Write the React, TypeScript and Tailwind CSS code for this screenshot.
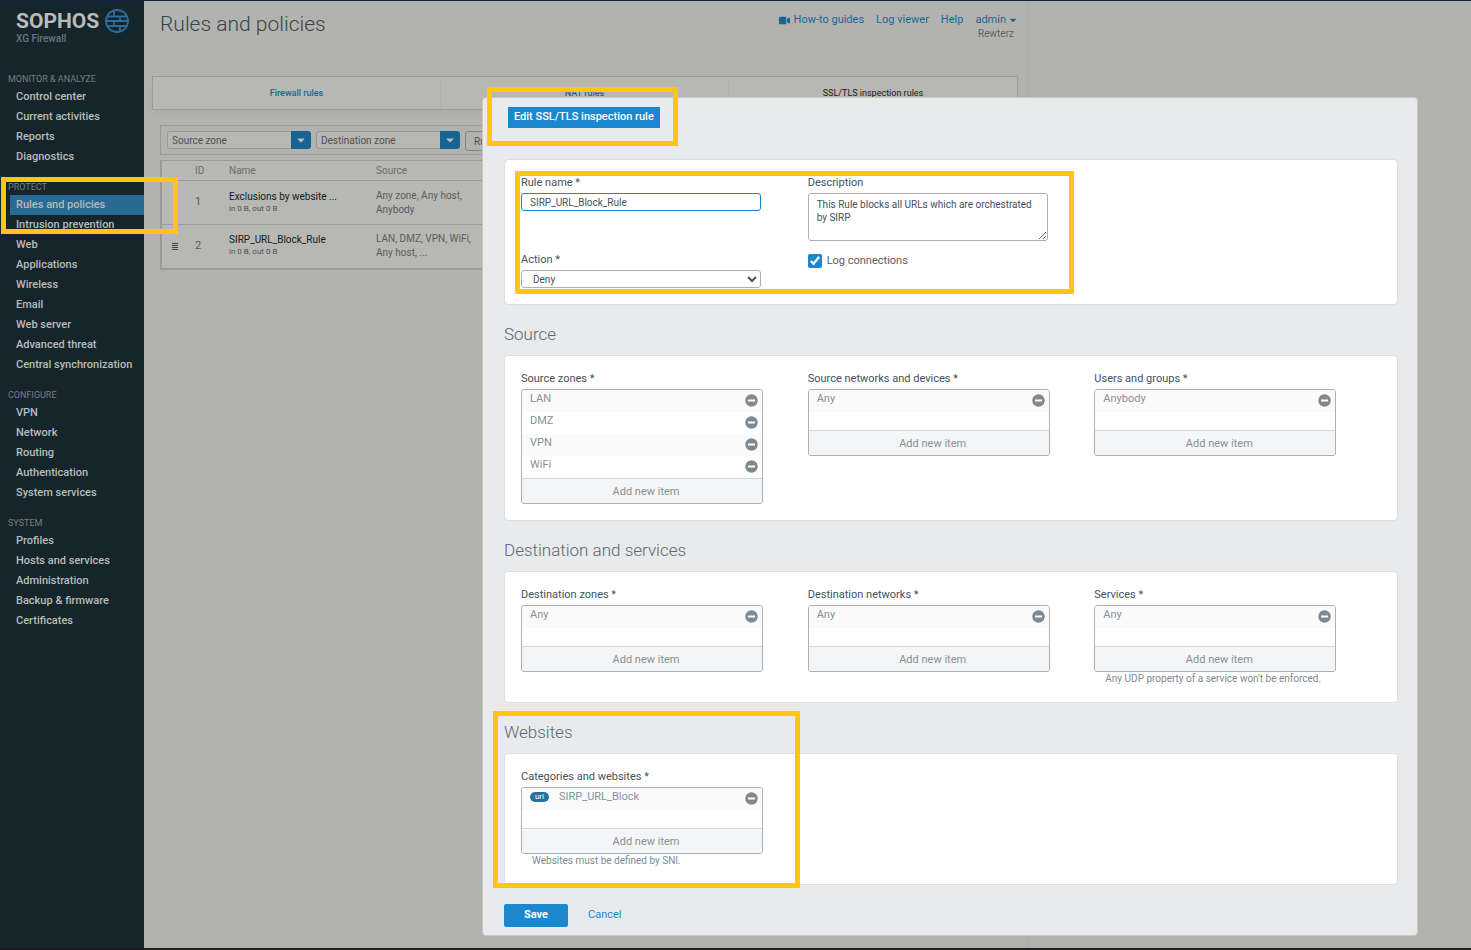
import type { ReactNode } from 'react';
import { FaVideo, FaCaretDown } from 'react-icons/fa';

const navSections = [
    { title: 'MONITOR & ANALYZE', items: ['Control center', 'Current activities', 'Reports', 'Diagnostics'] },
    {
        title: 'PROTECT',
        items: [
            'Rules and policies',
            'Intrusion prevention',
            'Web',
            'Applications',
            'Wireless',
            'Email',
            'Web server',
            'Advanced threat',
            'Central synchronization',
        ],
    },
    { title: 'CONFIGURE', items: ['VPN', 'Network', 'Routing', 'Authentication', 'System services'] },
    {
        title: 'SYSTEM',
        items: ['Profiles', 'Hosts and services', 'Administration', 'Backup & firmware', 'Certificates'],
    },
];

const rules = [
    { id: 1, name: 'Exclusions by website ...', source: 'Any zone, Any host, Anybody', draggable: false },
    { id: 2, name: 'SIRP_URL_Block_Rule', source: 'LAN, DMZ, VPN, WiFi, Any host, ...', draggable: true },
];

function Highlight({ className }: { className: string }) {
    return <div className={`pointer-events-none absolute z-20 border-5 border-[#ffc80f] ${className}`} />;
}

function GlobeLogo() {
    return (
        <svg width="24" height="24" viewBox="0 0 24 24" fill="none" stroke="#2a6f9a" strokeWidth="1.8">
            <circle cx="12" cy="12" r="11" />
            <path d="M2.5 7.5h19M1 12h22M2.5 17h19M9 1.5v6M15 7.5v4.5M9 12v5M15 17v5.5" />
        </svg>
    );
}

function Sidebar() {
    return (
        <aside className="relative w-36 shrink-0 bg-[#15252b]">
            <div className="flex h-[70px] items-start gap-1.5 pl-4 pt-2">
                <div>
                    <div className="text-[21px] font-bold leading-6 text-[#b9bcba]">SOPHOS</div>
                    <div className="text-[10px] font-medium leading-3 text-[#69767b]">XG Firewall</div>
                </div>
                <GlobeLogo />
            </div>
            <nav>
                {navSections.map((section) => (
                    <div key={section.title} className="mb-3">
                        <h2 className="pl-2 text-[9px] leading-4 text-[#767f80]">{section.title}</h2>
                        {section.items.map((item) => (
                            <a
                                key={item}
                                href="#"
                                className={`ml-2.5 block pl-1.5 text-[11px] font-medium leading-5 whitespace-nowrap text-[#b9bcba] ${
                                    item === 'Rules and policies' ? 'bg-[#286a93]' : ''
                                }`}
                            >
                                {item}
                            </a>
                        ))}
                    </div>
                ))}
            </nav>
            <Highlight className="left-px top-44 h-[57px] w-[177px]" />
        </aside>
    );
}

function ZoneFilter({ label }: { label: string }) {
    return (
        <div className="flex h-[18px] w-36 overflow-hidden rounded-[3px]">
            <select
                aria-label={label}
                className="min-w-0 flex-1 appearance-none rounded-l-[3px] border border-r-0 border-[#979a98] bg-[#b7b8b3] pl-1 text-[10px] text-[#4c5153]"
            >
                <option>{label}</option>
            </select>
            <span className="flex w-5 items-center justify-center bg-[#176391] text-[#b9bcba]">
                <FaCaretDown size={12} />
            </span>
        </div>
    );
}

function RulesTable() {
    return (
        <table className="mt-[5px] w-full border-collapse border-2 border-t border-[#999b99] bg-[#b7b8b3] text-left">
            <thead>
                <tr className="h-5 border-b border-[#999b99] text-[10px] text-[#696d6d]">
                    <th className="w-[30px]" />
                    <th className="w-[38px] pl-1 font-normal">ID</th>
                    <th className="w-[147px] font-normal">Name</th>
                    <th className="font-normal">Source</th>
                </tr>
            </thead>
            <tbody>
                {rules.map((rule) => (
                    <tr key={rule.id} className="h-11 border-b border-[#999b99]">
                        <td className="pl-2.5">
                            {rule.draggable && (
                                <svg width="6" height="9" viewBox="0 0 6 9" stroke="#3f4344">
                                    <path d="M0 1.5h6M0 3.5h6M0 5.5h6M0 7.5h6" />
                                </svg>
                            )}
                        </td>
                        <td className="pl-1 text-[11px] text-[#575c5d]">{rule.id}</td>
                        <td>
                            <div className="text-[10px] leading-3 text-[#16191a]">{rule.name}</div>
                            <div className="text-[8px] leading-3 text-[#4c5153]">in 0 B, out 0 B</div>
                        </td>
                        <td className="text-[10px] leading-[14px] text-[#575c5d]">
                            <div className="w-[106px]">{rule.source}</div>
                        </td>
                    </tr>
                ))}
            </tbody>
        </table>
    );
}

function RulesPage() {
    return (
        <main className="w-[886px] shrink-0 border-r-4 border-[#afafad] px-2">
            <header className="flex h-[75px] justify-between pl-2 pt-[9px]">
                <h1 className="text-[21px] font-light leading-7 text-[#37434a]">Rules and policies</h1>
                <div className="pt-0.5 text-right">
                    <div className="flex gap-3 text-[11px] leading-4 text-[#1b6594]">
                        <a href="#" className="flex items-center gap-1">
                            <FaVideo size={11} />
                            How-to guides
                        </a>
                        <a href="#">Log viewer</a>
                        <a href="#">Help</a>
                        <a href="#" className="flex items-center gap-0.5">
                            admin
                            <FaCaretDown size={10} />
                        </a>
                    </div>
                    <div className="pr-1 text-[10px] leading-3 text-[#5f6669]">Rewterz</div>
                </div>
            </header>
            <nav className="grid h-[34px] grid-cols-3 divide-x divide-[#b0b1ad] border border-[#999b99] bg-[#b7b8b3] text-center text-[9px] leading-8 shadow-[0_4px_6px_#adaeab]">
                <a href="#" className="font-medium text-[#1b6594]">Firewall rules</a>
                <a href="#" className="font-medium text-[#1b6594]">NAT rules</a>
                <a href="#" className="text-[#16191a]">SSL/TLS inspection rules</a>
            </nav>
            <div className="mt-[15px] px-2">
                <div className="flex h-[30px] gap-[5px] border border-[#999b99] px-1.5 pt-[5px]">
                    <ZoneFilter label="Source zone" />
                    <ZoneFilter label="Destination zone" />
                    <button className="h-5 w-20 rounded-[3px] border border-[#7f8485] px-2 text-left text-[10px] text-[#4c5153]">
                        Rule
                    </button>
                </div>
                <RulesTable />
            </div>
        </main>
    );
}

function Card({ children }: { children: ReactNode }) {
    return (
        <div className="relative grid grid-cols-3 rounded-[4px] border border-[#dcdee0] bg-white px-4 pb-4 pt-[15px]">
            {children}
        </div>
    );
}

function SectionTitle({ children }: { children: ReactNode }) {
    return <h2 className="pb-[7px] pt-[15px] text-[17px] font-light leading-7 text-[#60676c]">{children}</h2>;
}

interface ItemListProps {
    label: string;
    items: string[];
    badge?: string;
    help?: string;
}

function ItemList({ label, items, badge, help }: ItemListProps) {
    return (
        <div className="w-[242px]">
            <h3 className="text-[11px] leading-4 text-[#43525c]">{label} *</h3>
            <div className="mt-0.5 overflow-hidden rounded-[3px] border border-[#a9b1b8]">
                <ul className="min-h-10">
                    {items.map((item) => (
                        <li
                            key={item}
                            className="flex h-[22px] items-start justify-between pl-2 pr-1 text-[11px] leading-[18px] text-[#86919a] odd:bg-[#fafafa]"
                        >
                            <span className="flex items-center gap-2.5">
                                {badge && (
                                    <span className="h-2.5 w-[19px] rounded-full bg-[#27739f] text-center text-[8px] leading-[10px] text-white">
                                        {badge}
                                    </span>
                                )}
                                {item}
                            </span>
                            <button aria-label={`Remove ${item}`} className="mt-1">
                                <svg width="13" height="13" viewBox="0 0 13 13">
                                    <circle cx="6.5" cy="6.5" r="6.2" fill="#7d8a93" />
                                    <path d="M3 6.5h7" stroke="#fff" strokeWidth="2" />
                                </svg>
                            </button>
                        </li>
                    ))}
                </ul>
                <button className="block h-[25px] w-full border-t border-[#d5d8db] bg-[#f4f5f7] pl-2 pt-0.5 text-[11px] text-[#8a8f93]">
                    Add new item
                </button>
            </div>
            {help && <p className="pl-[11px] text-[10px] leading-[14px] whitespace-nowrap text-[#7d8a93]">{help}</p>}
        </div>
    );
}

function RuleDetails() {
    return (
        <Card>
            <div>
                <label htmlFor="rule-name" className="block text-[11px] leading-4 text-[#43525c]">Rule name *</label>
                <input
                    id="rule-name"
                    type="text"
                    autoFocus
                    defaultValue="SIRP_URL_Block_Rule"
                    onFocus={(e) => e.target.setSelectionRange(e.target.value.length, e.target.value.length)}
                    className="mt-0.5 block h-[18px] w-60 rounded-[3px] border border-[#1a87cf] px-2 text-[10px] text-[#43525c] outline-none"
                />
                <label htmlFor="action" className="mt-[41px] block text-[11px] leading-4 text-[#43525c]">Action *</label>
                <select
                    id="action"
                    className="mt-0.5 block h-[18px] w-60 rounded-[3px] border border-[#a9b1b8] bg-white pl-[7px] text-[10px] text-[#43525c]"
                >
                    <option>Deny</option>
                </select>
            </div>
            <div>
                <label htmlFor="description" className="block text-[11px] leading-4 text-[#43525c]">Description</label>
                <textarea
                    id="description"
                    defaultValue="This Rule blocks all URLs which are orchestrated by SIRP"
                    className="mt-0.5 block h-12 w-60 rounded-[3px] border border-[#a9b1b8] px-2 py-1 text-[10px] leading-[13px] text-[#43525c]"
                />
                <label className="mt-3 flex items-center gap-[5px] text-[11px] leading-4 text-[#5a6064]">
                    <input type="checkbox" defaultChecked className="size-3.5 accent-[#1a87cf]" />
                    Log connections
                </label>
            </div>
            <Highlight className="left-2.5 top-[11px] h-[123px] w-[559px]" />
        </Card>
    );
}

function EditRuleDialog() {
    return (
        <div className="absolute inset-x-0 top-0 z-10 pl-[482px] pr-[53px] pt-24">
            <div role="dialog" className="relative rounded-[4px] border border-[#c6c8c8] bg-[#e8eaec] pb-2 pl-[21px] pr-[19px] pt-[9px]">
                <h2 className="ml-1 h-[21px] w-fit bg-[#1a87cf] px-1.5 text-[11px] font-medium leading-5 text-white">
                    Edit SSL/TLS inspection rule
                </h2>
                <Highlight className="left-1 -top-[11px] h-[59px] w-[191px]" />
                <div className="mt-[31px]">
                    <RuleDetails />
                    <SectionTitle>Source</SectionTitle>
                    <Card>
                        <ItemList label="Source zones" items={['LAN', 'DMZ', 'VPN', 'WiFi']} />
                        <ItemList label="Source networks and devices" items={['Any']} />
                        <ItemList label="Users and groups" items={['Anybody']} />
                    </Card>
                    <SectionTitle>Destination and services</SectionTitle>
                    <Card>
                        <ItemList label="Destination zones" items={['Any']} />
                        <ItemList label="Destination networks" items={['Any']} />
                        <ItemList
                            label="Services"
                            items={['Any']}
                            help="Any UDP property of a service won't be enforced."
                        />
                    </Card>
                    <div className="relative">
                        <SectionTitle>Websites</SectionTitle>
                        <Card>
                            <ItemList
                                label="Categories and websites"
                                items={['SIRP_URL_Block']}
                                badge="url"
                                help="Websites must be defined by SNI."
                            />
                        </Card>
                        <Highlight className="-left-[11px] top-2 h-[177px] w-[307px]" />
                    </div>
                </div>
                <div className="mt-[19px] flex items-center gap-5 text-[11px]">
                    <button className="h-[23px] w-16 rounded-[2px] bg-[#1a87cf] font-bold text-white">Save</button>
                    <a href="#" className="text-[#1a87cf]">Cancel</a>
                </div>
            </div>
        </div>
    );
}

export default function App() {
    return (
        <div className="relative flex min-h-screen flex-col border-b-2 border-t border-b-[#1c1c1c] border-t-[#12264a] bg-[#b2b3ae] font-[Roboto,sans-serif]">
            <div className="flex flex-1">
                <Sidebar />
                <RulesPage />
            </div>
            <EditRuleDialog />
        </div>
    );
}
